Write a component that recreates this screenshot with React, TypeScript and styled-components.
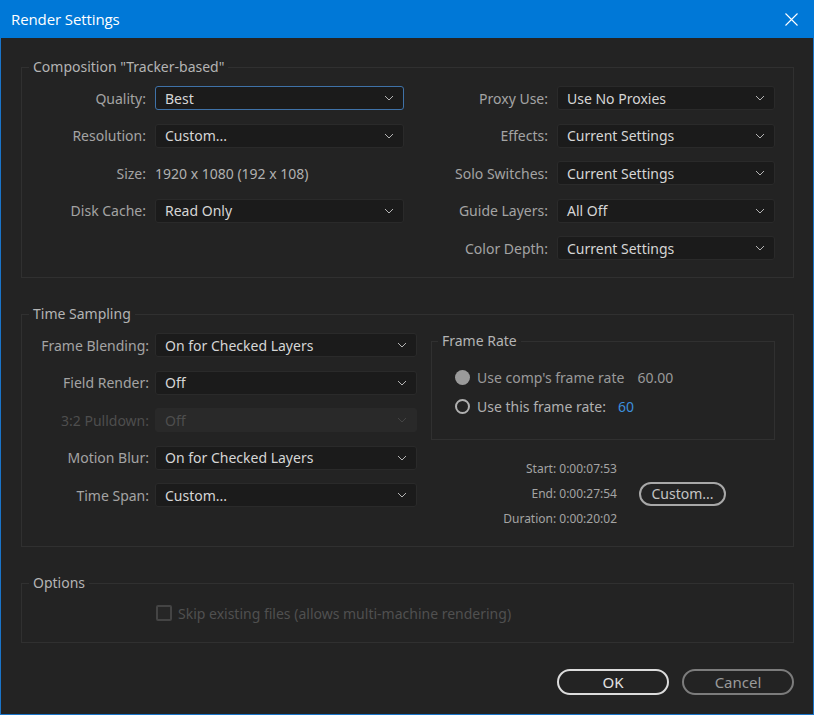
import styled, { createGlobalStyle, css } from 'styled-components';

const GlobalStyle = createGlobalStyle`
  html, body {
    margin: 0;
    padding: 0;
    background: #232323;
  }
  body {
    font-family: 'Noto Sans', 'Open Sans', sans-serif;
    -webkit-font-smoothing: antialiased;
  }
  * {
    box-sizing: border-box;
  }
`;

type SelectProps = {
  value: string;
  focused?: boolean;
  disabled?: boolean;
};

const Chevron = () => (
  <svg width="10" height="6" viewBox="0 0 10 6">
    <path d="M1 1 L5 5 L9 1" fill="none" stroke="currentColor" strokeWidth="1" />
  </svg>
);

const Select = ({ value, focused, disabled }: SelectProps) => (
  <SelectBox $focused={focused} $disabled={disabled}>
    <span>{value}</span>
    <Chevron />
  </SelectBox>
);

const App = () => {
  return (
    <>
      <GlobalStyle />
      <Window>
        <TitleBar>
          <Title>Render Settings</Title>
          <CloseIcon width="13" height="13" viewBox="0 0 13 13">
            <path d="M0.5 0.5 L12.5 12.5 M12.5 0.5 L0.5 12.5" stroke="#fff" strokeWidth="1.1" />
          </CloseIcon>
        </TitleBar>

        <Body>
          <Group $pt={18} $pb={17}>
            <Legend $left={7}>Composition "Tracker-based"</Legend>
            <Columns>
              <FieldGrid $label={124} $control={249} $gap={9}>
                <Label>Quality:</Label>
                <Select value="Best" focused />
                <Label>Resolution:</Label>
                <Select value="Custom..." />
                <Label>Size:</Label>
                <StaticValue>1920 x 1080 (192 x 108)</StaticValue>
                <Label>Disk Cache:</Label>
                <Select value="Read Only" />
              </FieldGrid>
              <FieldGrid $label={135} $control={218} $gap={9}>
                <Label>Proxy Use:</Label>
                <Select value="Use No Proxies" />
                <Label>Effects:</Label>
                <Select value="Current Settings" />
                <Label>Solo Switches:</Label>
                <Select value="Current Settings" />
                <Label>Guide Layers:</Label>
                <Select value="All Off" />
                <Label>Color Depth:</Label>
                <Select value="Current Settings" />
              </FieldGrid>
            </Columns>
          </Group>

          <Group $pt={18} $pb={18}>
            <Legend $left={7}>Time Sampling</Legend>
            <Columns>
              <FieldGrid $label={127} $control={262} $gap={6}>
                <Label>Frame Blending:</Label>
                <Select value="On for Checked Layers" />
                <Label>Field Render:</Label>
                <Select value="Off" />
                <Label $disabled>3:2 Pulldown:</Label>
                <Select value="Off" disabled />
                <Label>Motion Blur:</Label>
                <Select value="On for Checked Layers" />
                <Label>Time Span:</Label>
                <Select value="Custom..." />
              </FieldGrid>

              <SideColumn>
                <SubGroup>
                  <Legend $left={6}>Frame Rate</Legend>
                  <RadioRow>
                    <Radio $checked />
                    <RadioText $disabled>Use comp's frame rate</RadioText>
                    <RateValue $gap={13}>60.00</RateValue>
                  </RadioRow>
                  <RadioRow>
                    <Radio />
                    <RadioText>Use this frame rate:</RadioText>
                    <RateValue $gap={12} $accent>60</RateValue>
                  </RadioRow>
                </SubGroup>

                <SpanRow>
                  <SpanTimes>
                    <span>Start: 0:00:07:53</span>
                    <span>End: 0:00:27:54</span>
                    <span>Duration: 0:00:20:02</span>
                  </SpanTimes>
                  <PillButton $w={87} $h={24} $tone="neutral">
                    Custom...
                  </PillButton>
                </SpanRow>
              </SideColumn>
            </Columns>
          </Group>

          <Group $pt={21} $pb={21}>
            <Legend $left={7}>Options</Legend>
            <CheckRow>
              <CheckBox />
              <CheckText>Skip existing files (allows multi-machine rendering)</CheckText>
            </CheckRow>
          </Group>

          <Footer>
            <PillButton $w={112} $h={26} $tone="primary">
              OK
            </PillButton>
            <PillButton $w={112} $h={26} $tone="muted">
              Cancel
            </PillButton>
          </Footer>
        </Body>
      </Window>
    </>
  );
};

export default App;

const Window = styled.div`
  width: 814px;
  height: 715px;
  display: flex;
  flex-direction: column;
  background: #232323;
`;

const TitleBar = styled.div`
  height: 38px;
  flex-shrink: 0;
  background: #0078d7;
  display: flex;
  align-items: center;
  justify-content: space-between;
  padding: 0 16px 0 11px;
`;

const Title = styled.span`
  color: #fff;
  font-family: 'Open Sans', 'Noto Sans', sans-serif;
  font-size: 15px;
  letter-spacing: -0.1px;
`;

const CloseIcon = styled.svg`
  display: block;
`;

const Body = styled.div`
  flex: 1;
  display: flex;
  flex-direction: column;
  gap: 36px;
  padding: 29px 19px 0 20px;
  border: 1px solid #1a74c8;
  border-top: none;
`;

const Group = styled.div<{ $pt: number; $pb: number }>`
  position: relative;
  border: 1px solid #303030;
  padding: ${p => p.$pt}px 18px ${p => p.$pb}px 0;
`;

const Legend = styled.span<{ $left: number }>`
  position: absolute;
  top: -10px;
  left: ${p => p.$left}px;
  padding: 0 4px;
  background: #232323;
  color: #b4b4b4;
  font-size: 14px;
  line-height: 18px;
`;

const Columns = styled.div`
  display: flex;
  justify-content: space-between;
  align-items: flex-start;
`;

const FieldGrid = styled.div<{ $label: number; $control: number; $gap: number }>`
  display: grid;
  grid-template-columns: ${p => p.$label}px ${p => p.$control}px;
  grid-auto-rows: 24px;
  column-gap: ${p => p.$gap}px;
  row-gap: 13.5px;
  align-items: center;
`;

const Label = styled.span<{ $disabled?: boolean }>`
  text-align: right;
  color: ${p => (p.$disabled ? '#4e4e4e' : '#a4a4a4')};
  font-size: 14px;
  white-space: nowrap;
`;

const StaticValue = styled.span`
  color: #b0b0b0;
  font-size: 14px;
  white-space: nowrap;
`;

const SelectBox = styled.div<{ $focused?: boolean; $disabled?: boolean }>`
  height: 24px;
  display: flex;
  align-items: center;
  justify-content: space-between;
  padding: 0 9px 0 9px;
  background: #1b1b1b;
  border: 1px solid #2a2a2a;
  border-radius: 3px;
  color: #d6d6d6;
  font-size: 14px;
  white-space: nowrap;

  svg {
    color: #b4b4b4;
    flex-shrink: 0;
  }

  ${p =>
    p.$focused &&
    css`
      border-color: #3f72a8;
    `}

  ${p =>
    p.$disabled &&
    css`
      background: #292929;
      border-color: #292929;
      color: #4e4e4e;
      svg {
        color: #444;
      }
    `}
`;

const SideColumn = styled.div`
  width: 344px;
  margin-top: 8px;
  display: flex;
  flex-direction: column;
  gap: 19px;
`;

const SubGroup = styled.div`
  position: relative;
  height: 99px;
  border: 1px solid #303030;
  padding: 25px 0 0 23px;
  display: flex;
  flex-direction: column;
  gap: 9px;
`;

const RadioRow = styled.div`
  height: 20px;
  display: flex;
  align-items: center;
`;

const Radio = styled.span<{ $checked?: boolean }>`
  width: 15px;
  height: 15px;
  border-radius: 50%;
  flex-shrink: 0;
  margin-right: 7px;
  ${p =>
    p.$checked
      ? css`
          background: #9a9a9a;
        `
      : css`
          border: 2px solid #b0b0b0;
        `}
`;

const RadioText = styled.span<{ $disabled?: boolean }>`
  color: ${p => (p.$disabled ? '#9a9a9a' : '#b0b0b0')};
  font-size: 14px;
  white-space: nowrap;
`;

const RateValue = styled.span<{ $gap: number; $accent?: boolean }>`
  margin-left: ${p => p.$gap}px;
  color: ${p => (p.$accent ? '#3d8fdc' : '#9a9a9a')};
  font-size: 14px;
`;

const SpanRow = styled.div`
  display: flex;
  align-items: center;
  gap: 22px;
`;

const SpanTimes = styled.div`
  width: 186px;
  display: flex;
  flex-direction: column;
  align-items: flex-end;
  gap: 6px;
  color: #a4a4a4;
  font-size: 12px;
  line-height: 19px;
`;

const PillButton = styled.div<{ $w: number; $h: number; $tone: 'primary' | 'neutral' | 'muted' }>`
  width: ${p => p.$w}px;
  height: ${p => p.$h}px;
  border-radius: ${p => p.$h / 2}px;
  display: flex;
  align-items: center;
  justify-content: center;
  font-size: 15px;
  border: 2px solid;
  ${p =>
    p.$tone === 'primary' &&
    css`
      border-color: #dcdcdc;
      color: #e4e4e4;
    `}
  ${p =>
    p.$tone === 'neutral' &&
    css`
      border-color: #a8a8a8;
      color: #c4c4c4;
      font-size: 14px;
    `}
  ${p =>
    p.$tone === 'muted' &&
    css`
      border-color: #7c7c7c;
      color: #9a9a9a;
    `}
`;

const CheckRow = styled.div`
  display: flex;
  align-items: center;
  gap: 6px;
  padding-left: 134px;
  height: 16px;
`;

const CheckBox = styled.span`
  width: 16px;
  height: 16px;
  border: 2px solid #444;
  border-radius: 2px;
  background: #262626;
`;

const CheckText = styled.span`
  color: #505050;
  font-size: 14px;
  white-space: nowrap;
`;

const Footer = styled.div`
  display: flex;
  justify-content: flex-end;
  gap: 13px;
  margin-top: -10px;
`;
